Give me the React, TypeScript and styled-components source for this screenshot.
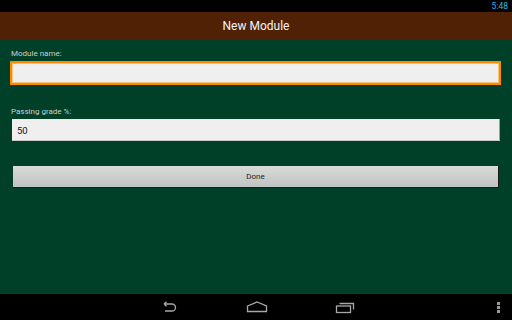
import React from "react";
import styled, { createGlobalStyle } from "styled-components";

const GlobalStyle = createGlobalStyle`
  html, body {
    margin: 0;
    padding: 0;
    background: #000;
  }
  body {
    font-family: Roboto, "Liberation Sans", sans-serif;
  }
`;

const Screen = styled.div`
  width: 512px;
  height: 320px;
  display: flex;
  flex-direction: column;
  overflow: hidden;
`;

const StatusBar = styled.div`
  height: 12px;
  background: #000;
  display: flex;
  justify-content: flex-end;
  align-items: center;
  padding-right: 4px;
`;

const Clock = styled.span`
  color: #33b5e5;
  font-size: 8.5px;
  line-height: 12px;
`;

const TitleBar = styled.div`
  height: 28px;
  background: #512106;
  display: flex;
  align-items: center;
  justify-content: center;
  color: #f4f4f4;
  font-size: 12px;
`;

const Content = styled.div`
  flex: 1;
  background: #003f28;
  display: flex;
  flex-direction: column;
  padding: 8px 11px 0 10px;
`;

const Label = styled.div`
  color: #c8d0cc;
  font-size: 8px;
  line-height: 12px;
  padding-left: 1px;
  height: 13px;
`;

const Field = styled.div<{ $focused?: boolean }>`
  height: ${(p) => (p.$focused ? "20px" : "22px")};
  margin: ${(p) => (p.$focused ? "0" : "0 1px 0 2px")};
  background: #efefef;
  border: ${(p) => (p.$focused ? "2px solid #ff8a00" : "none")};
  box-shadow: ${(p) =>
    p.$focused ? "inset 0 0 0 1px #f6c47a" : "inset 0 -1px 0 #c9c9c9, inset -1px 0 0 #9aa09c"};
  display: flex;
  align-items: center;
  padding-left: 5px;
  font-size: 9.5px;
  color: #111;
`;

const Gap = styled.div<{ $h: number }>`
  height: ${(p) => p.$h}px;
  flex-shrink: 0;
`;

const Button = styled.div`
  height: 22px;
  margin: 0 2px 0 3px;
  background: linear-gradient(#d9dada, #c0c3c2);
  border-right: 1px solid #1b1b1b;
  border-bottom: 1px solid #1b1b1b;
  box-sizing: border-box;
  display: flex;
  align-items: center;
  justify-content: center;
  font-size: 8px;
  color: #222;
`;

const NavBar = styled.div`
  height: 26px;
  background: #000;
  display: flex;
  align-items: center;
  position: relative;
`;

const NavIcons = styled.div`
  flex: 1;
  display: flex;
  justify-content: center;
  gap: 52px;
  padding-left: 2px;
`;

const NavButton = styled.div`
  width: 36px;
  display: flex;
  justify-content: center;
`;

const MenuDots = styled.div`
  position: absolute;
  right: 12px;
  top: 8px;
  display: flex;
  flex-direction: column;
  gap: 1px;
`;

const Dot = styled.span`
  width: 3px;
  height: 3px;
  background: #9a9a9a;
`;

const BackIcon = () => (
  <svg width="18" height="12" viewBox="0 0 18 12">
    <path
      d="M4 3 H12 A3.5 3.5 0 0 1 12 10 H5 M4 3 L6.5 0.8 M4 3 L6.5 5.2"
      fill="none"
      stroke="#a8a8a8"
      strokeWidth="1.3"
    />
  </svg>
);

const HomeIcon = () => (
  <svg width="22" height="12" viewBox="0 0 22 12">
    <path
      d="M1.5 5 L11 1 L20.5 5 V10.5 H1.5 Z"
      fill="none"
      stroke="#a8a8a8"
      strokeWidth="1.3"
    />
  </svg>
);

const RecentsIcon = () => (
  <svg width="20" height="13" viewBox="0 0 20 13">
    <rect x="1.5" y="5" width="14" height="6.5" fill="none" stroke="#a8a8a8" strokeWidth="1.3" />
    <path d="M4.5 2.5 H18.5 V8.5" fill="none" stroke="#a8a8a8" strokeWidth="1.3" />
  </svg>
);

export default function App() {
  return (
    <>
      <GlobalStyle />
      <Screen>
        <StatusBar>
          <Clock>5:48</Clock>
        </StatusBar>
        <TitleBar>New Module</TitleBar>
        <Content>
          <Label>Module name:</Label>
          <Field $focused />
          <Gap $h={21} />
          <Label>Passing grade %:</Label>
          <Field>50</Field>
          <Gap $h={25} />
          <Button>Done</Button>
        </Content>
        <NavBar>
          <NavIcons>
            <NavButton>
              <BackIcon />
            </NavButton>
            <NavButton>
              <HomeIcon />
            </NavButton>
            <NavButton>
              <RecentsIcon />
            </NavButton>
          </NavIcons>
          <MenuDots>
            <Dot />
            <Dot />
            <Dot />
          </MenuDots>
        </NavBar>
      </Screen>
    </>
  );
}
